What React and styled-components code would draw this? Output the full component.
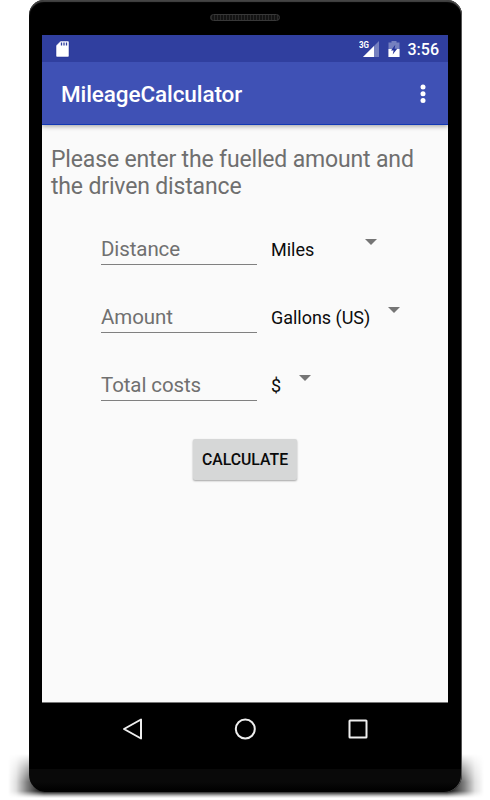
import React from "react";
import styled, { createGlobalStyle } from "styled-components";

const GlobalStyle = createGlobalStyle`
* {
    box-sizing: border-box;
}

body {
    margin: 0;
    background: #fff;
    font-family: Roboto, "Liberation Sans", sans-serif;
    overflow: hidden;
}
`

const Stage = styled.main`
position: relative;
width: 490px;
height: 800px;
padding-left: 29px;
overflow: hidden;
`

// shadow the phone throws on the ground
const GroundShadow = styled.div`
position: absolute;
left: 8px;
right: 6px;
top: 754px;
height: 44px;
background: linear-gradient(
    to right,
    transparent 0,
    rgba(0, 0, 0, 0.12) 8px,
    rgba(0, 0, 0, 0.5) 19px,
    #000 36px,
    #000 439px,
    rgba(0, 0, 0, 0.5) 456px,
    rgba(0, 0, 0, 0.12) 467px,
    transparent 476px
);
mask-image: linear-gradient(transparent 0, rgba(0, 0, 0, 0.55) 14px, #000 28px, #000 37px, rgba(0, 0, 0, 0.2) 42px, transparent 44px);
`

const Phone = styled.div`
position: relative;
display: flex;
flex-direction: column;
width: 433px;
height: 792px;
padding: 0 14px 0 13px;
border-radius: 15px 15px 17px 17px;
background: linear-gradient(#000 769px, #090909 769px, #090909 782px, #000 791px);
box-shadow: inset -1px 0 0 #555, inset 0 2px 1px #444;
`

const Bezel = styled.div`
display: flex;
justify-content: center;
height: 35px;
padding-top: 14px;
`

const Speaker = styled.div`
width: 70px;
height: 7px;
border: 1px solid #383838;
border-radius: 4px;
background: repeating-linear-gradient(90deg, #292929 0 1px, #131313 1px 3px);
`

const Screen = styled.div`
display: flex;
flex-direction: column;
height: 668px;
background: #fafafa;
border-bottom: 1px solid #777;
`

const StatusBar = styled.header`
display: flex;
align-items: center;
height: 27px;
padding: 0 9px 0 12px;
background: #303f9f;
color: #fff;
`

const StatusRight = styled.div`
display: flex;
align-items: center;
gap: 8px;
margin-left: auto;
`

const Clock = styled.span`
padding-top: 1px;
font-size: 16px;
font-weight: 500;
line-height: 27px;
`

const Toolbar = styled.div`
display: flex;
align-items: center;
justify-content: space-between;
height: 63px;
padding: 2px 18px 0 19px;
border-bottom: 1px solid #1238b4;
background: #3f51b5;
box-shadow: 0 1px 5px rgba(0, 0, 0, 0.4);
clip-path: inset(0 0 -8px 0);
`

const Title = styled.h1`
margin: 0;
color: #fff;
font-size: 22.5px;
font-weight: 500;
line-height: 30px;
letter-spacing: -0.1px;
`

const Content = styled.section`
display: flex;
flex-direction: column;
padding: 21px 9px 0;
`

const Intro = styled.p`
margin: 0;
color: #6f6f6f;
font-size: 23px;
line-height: 27px;
letter-spacing: -0.16px;
white-space: nowrap;
`

const Form = styled.div`
display: flex;
flex-direction: column;
gap: 36px;
margin: 33px 0 0 50px;
`

const Row = styled.div`
display: flex;
height: 32px;
`

const Field = styled.div`
width: 156px;
height: 32px;
margin-right: 14px;
border-bottom: 1px solid #808080;
color: #707070;
font-size: 20.5px;
line-height: 32px;
letter-spacing: -0.1px;
`

const Spinner = styled.div`
display: flex;
width: ${(props) => props.$width}px;
justify-content: space-between;
color: #0c0c0c;
font-size: 18px;
line-height: 33px;
letter-spacing: -0.03px;
white-space: nowrap;
`

const Caret = styled.svg`
width: 12px;
height: 6px;
margin-top: 6px;
fill: #757575;
`

const CalculateButton = styled.button`
align-self: center;
width: 104px;
height: 41px;
margin-top: 38px;
padding: 0;
border: 0;
border-radius: 2px;
background: #d6d7d7;
box-shadow: 0 1px 2px rgba(0, 0, 0, 0.35);
color: #0a0a0a;
font-family: inherit;
font-size: 15.8px;
font-weight: 500;
`

const NavBar = styled.nav`
display: flex;
justify-content: space-between;
height: 52px;
padding: 14px 78px 0 79px;

svg {
    width: 24px;
    height: 24px;
    fill: none;
    stroke: #eee;
    stroke-width: 2;
    stroke-linejoin: round;
}
`

const SdCardIcon = () => (
  <svg width="16" height="18" viewBox="0 0 16 18">
    <path d="M6.5 1H14Q15 1 15 2V16Q15 17 14 17H3Q2 17 2 16V5.5Z" fill="#fff" stroke="#1c2b91" strokeWidth=".5" />
    <path d="M7.5 2.5v3M10 2.5v3M12.5 2.5v3" stroke="#303f9f" strokeWidth="1.3" />
  </svg>
);

const SignalIcon = () => (
  <svg width="21" height="18" viewBox="0 0 21 18">
    <path d="M20 1V17H4Z" fill="#7580bf" />
    <path d="M15 6V17H4Z" fill="#fff" />
    <text x="0" y="8" fill="#fff" fontSize="9.5" fontWeight="700" textLength="10" lengthAdjust="spacingAndGlyphs">3G</text>
  </svg>
);

const BatteryIcon = () => (
  <svg width="12" height="18" viewBox="0 0 12 18">
    <path d="M3.5 1h5v1.5H11.5V17H.5V2.5h3Z" fill="#7580bf" />
    <path d="M.5 9h11v8H.5Z" fill="#fff" />
    <path d="M7.3 4.8L3 10.5h2.6L4.7 14.5 9.2 8.8H6.6Z" fill="#26359b" />
  </svg>
);

const fields = [
  { label: "Distance", unit: "Miles", width: 105.5 },
  { label: "Amount", unit: "Gallons (US)", width: 129 },
  { label: "Total costs", unit: "$", width: 40 },
];

const App = () => {
  return (
    <Stage>
      <GlobalStyle />
      <GroundShadow />
      <Phone>
        <Bezel>
          <Speaker />
        </Bezel>
        <Screen>
          <StatusBar>
            <SdCardIcon />
            <StatusRight>
              <SignalIcon />
              <BatteryIcon />
              <Clock>3:56</Clock>
            </StatusRight>
          </StatusBar>
          <Toolbar>
            <Title>MileageCalculator</Title>
            <svg width="14" height="20" viewBox="0 0 14 20" fill="#fff">
              <circle cx="7" cy="3" r="2.5" />
              <circle cx="7" cy="9.7" r="2.5" />
              <circle cx="7" cy="16.4" r="2.5" />
            </svg>
          </Toolbar>
          <Content>
            <Intro>
              Please enter the fuelled amount and
              <br />
              the driven distance
            </Intro>
            <Form>
              {fields.map((field) => (
                <Row key={field.label}>
                  <Field>{field.label}</Field>
                  <Spinner $width={field.width}>
                    {field.unit}
                    <Caret viewBox="0 0 12 6">
                      <path d="M0 0H12L6 6Z" />
                    </Caret>
                  </Spinner>
                </Row>
              ))}
            </Form>
            <CalculateButton>CALCULATE</CalculateButton>
          </Content>
        </Screen>
        <NavBar>
          <svg viewBox="0 0 24 24">
            <path d="M20 2.5V21.5L3 12Z" />
          </svg>
          <svg viewBox="0 0 24 24">
            <circle cx="11.3" cy="12" r="9.5" />
          </svg>
          <svg viewBox="0 0 24 24">
            <rect x="3.5" y="3.5" width="17" height="17" rx=".5" />
          </svg>
        </NavBar>
      </Phone>
    </Stage>
  );
};

export default App;
